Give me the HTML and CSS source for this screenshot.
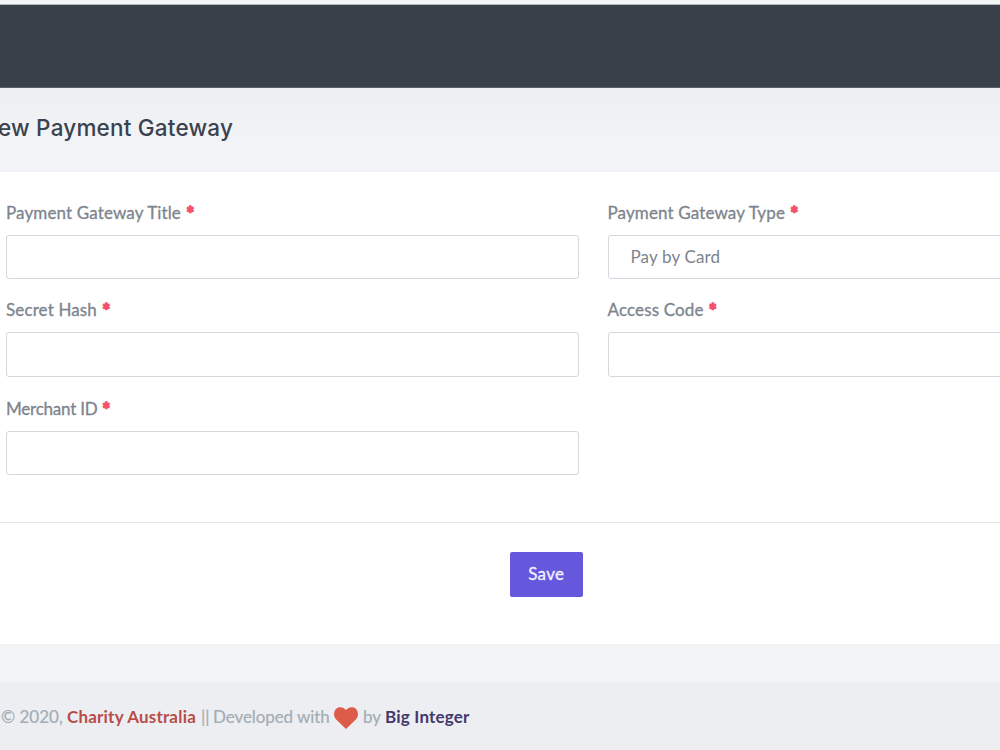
FILE: index.html
```html
<!DOCTYPE html>
<html lang="en">
<head>
<meta charset="utf-8">
<title>New Payment Gateway</title>
<link rel="stylesheet" href="styles.css">
</head>
<body>
<div class="page">
  <header class="topbar"></header>
  <main class="content">
    <h1 class="title">ew Payment Gateway</h1>
    <form class="card">
      <div class="grid">
        <div class="field"><label class="label l-title">Payment Gateway Title <span class="req">*</span></label><div class="input"></div></div>
        <div class="field"><label class="label l-type">Payment Gateway Type <span class="req">*</span></label><div class="input">Pay by Card</div></div>
        <div class="field"><label class="label l-hash">Secret Hash <span class="req">*</span></label><div class="input tall"></div></div>
        <div class="field"><label class="label l-code">Access Code <span class="req">*</span></label><div class="input tall"></div></div>
        <div class="field"><label class="label l-id">Merchant ID <span class="req">*</span></label><div class="input"></div></div>
      </div>
      <div class="actions"><button class="save" type="button">Save</button></div>
    </form>
  </main>
  <footer class="footer">
    <span class="copy">© 2020,</span>
    <b class="brand">Charity Australia</b>
    <span class="bars">||</span>
    <span class="dev">Developed with</span>
    <svg class="heart" viewBox="0 0 24 22"><path d="M12 22 2.200 12.600C-.8 9.500-.6 4.200 2.300 1.700 5.300-.8 9.600-.1 12 3.100 14.400-.1 18.700-.8 21.700 1.700 24.600 4.200 24.800 9.500 21.800 12.600Z"/></svg>
    <span class="by">by</span>
    <b class="dev-brand">Big Integer</b>
  </footer>
</div>
</body>
</html>
```
FILE: styles.css
```css
* { box-sizing: border-box; }
body { margin: 0; background: #f2f3f5; font-family: Lato, "Open Sans", sans-serif; font-size: 17px; color: #7d848d; }
.page { width: 1000px; height: 750px; overflow: hidden; display: flex; flex-direction: column; }
.topbar { height: 88px; flex: none; background: #3a414b; border-top: 4px solid #f3f6f7; border-bottom: 1px solid #59616a; box-shadow: inset 0 1px #b6babe; }
.content { height: 594px; flex: none; background: linear-gradient(#eeeff1, #f2f3f6 50px, #f2f3f5); }
.title { margin: 0 0 0 -2px; height: 84px; white-space: nowrap; font: 500 22.5px/79px Inter, sans-serif; letter-spacing: 0.2px; color: #3a424e; }
.card { background: #fff; height: 472px; padding-top: 30px; }
.grid { display: grid; grid-template-columns: 573px 573px; column-gap: 28.500px; grid-template-rows: 97px 99px 97px; padding-left: 6px; height: 320px; }
.label { display: flex; align-items: flex-start; height: 33px; line-height: 22px; white-space: pre; -webkit-text-stroke: 0.3px #7d848d; }
.l-title, .l-type, .l-hash, .l-code { letter-spacing: 0.13px; }
.l-id { letter-spacing: -0.22px; }
.req { color: #f4516c; font-weight: 900; font-size: 18px; -webkit-text-stroke: 1.4px #f4516c; padding-left: 1px; }
.input { height: 44px; border: 1px solid #d3d8de; border-radius: 3px; padding-left: 22px; line-height: 42px; letter-spacing: 0.15px; background: #fff; }
.tall { height: 45px; }
.actions { border-top: 1px solid #e1e6eb; padding: 29px 0 0 510px; }
.save { display: block; width: 72.500px; height: 45px; padding: 0 0 2px; border: 0; border-radius: 2px; background: #6658dd; color: #f2f0ff; font: 400 17px Lato, sans-serif; letter-spacing: 0.3px; -webkit-text-stroke: 0.3px #f2f0ff; }
.footer { flex: 1; background: #edeef2; display: flex; align-items: center; padding: 1px 0 0 1px; white-space: nowrap; color: #a2adb5; -webkit-text-stroke: 0.2px; }
.footer > * { flex: none; }
.copy { width: 66px; }
.brand { width: 134px; color: #b74d49; letter-spacing: 0.2px; -webkit-text-stroke: 0; }
.bars { width: 12px; }
.dev { width: 121px; letter-spacing: -0.08px; }
.heart { width: 24px; height: 22px; margin: 3px 5px 0 0; fill: #dc5c49; stroke: none; }
.by { width: 22px; }
.dev-brand { color: #42396c; letter-spacing: 0.2px; -webkit-text-stroke: 0; }
```
